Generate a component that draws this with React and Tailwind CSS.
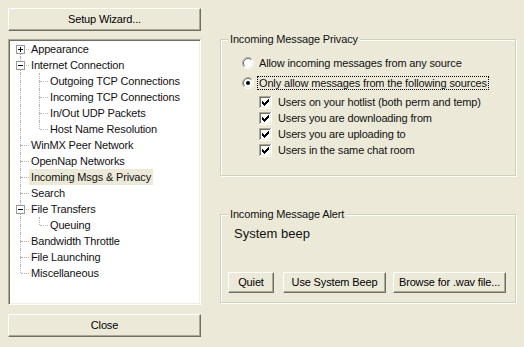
import React from 'react';

const tree = [
  { label: 'Appearance', level: 0, exp: '+', first: true },
  { label: 'Internet Connection', level: 0, exp: '-' },
  { label: 'Outgoing TCP Connections', level: 1 },
  { label: 'Incoming TCP Connections', level: 1 },
  { label: 'In/Out UDP Packets', level: 1 },
  { label: 'Host Name Resolution', level: 1, lastChild: true },
  { label: 'WinMX Peer Network', level: 0 },
  { label: 'OpenNap Networks', level: 0 },
  { label: 'Incoming Msgs & Privacy', level: 0, selected: true },
  { label: 'Search', level: 0 },
  { label: 'File Transfers', level: 0, exp: '-' },
  { label: 'Queuing', level: 1, lastChild: true },
  { label: 'Bandwidth Throttle', level: 0 },
  { label: 'File Launching', level: 0 },
  { label: 'Miscellaneous', level: 0, last: true },
];

const sources = [
  'Users on your hotlist (both perm and temp)',
  'Users you are downloading from',
  'Users you are uploading to',
  'Users in the same chat room',
];

const btn =
  'flex items-center justify-center bg-[#ECE9D8] border border-t-white border-l-white border-r-[#716F64] border-b-[#716F64] shadow-[inset_-1px_-1px_0_#ACA899] text-[11px] text-black tracking-[-0.15px]';

function Expander({ plus }) {
  return (
    <svg width="9" height="9" className="absolute left-[6px] top-[4px]">
      <rect x="0.5" y="0.5" width="8" height="8" fill="#fff" stroke="#919B9C" />
      <path d="M2 4.5h5" stroke="#000" shapeRendering="crispEdges" />
      {plus && <path d="M4.5 2v5" stroke="#000" shapeRendering="crispEdges" />}
    </svg>
  );
}

function LineCell({ top, bottom, horiz, exp }) {
  return (
    <div className="relative w-[19px] h-4 shrink-0">
      {top && <div className="absolute left-[10px] top-0 h-2 border-l border-dotted border-[#B4B4B4]" />}
      {bottom && <div className="absolute left-[10px] top-2 h-2 border-l border-dotted border-[#B4B4B4]" />}
      {horiz && <div className="absolute left-[11px] top-2 w-2 border-t border-dotted border-[#B4B4B4]" />}
      {exp && <Expander plus={exp === '+'} />}
    </div>
  );
}

function TreeRow({ item }) {
  return (
    <div className="flex h-4 items-center">
      {item.level === 0 ? (
        <LineCell top={!item.first} bottom={!item.last} horiz exp={item.exp} />
      ) : (
        <>
          <LineCell top bottom />
          <LineCell top bottom={!item.lastChild} horiz />
        </>
      )}
      <span className={`px-[2px] leading-4 whitespace-nowrap ${item.selected ? 'bg-[#ECE9D8]' : ''}`}>
        {item.label}
      </span>
    </div>
  );
}

function Radio({ checked }) {
  return (
    <svg width="12" height="12" viewBox="0 0 12 12" className="shrink-0">
      <circle cx="6" cy="6" r="5" fill="#fff" />
      <path d="M2.1 9.9A5.5 5.5 0 0 1 9.9 2.1" fill="none" stroke="#ACA899" />
      <path d="M9.9 2.1A5.5 5.5 0 0 1 2.1 9.9" fill="none" stroke="#fff" />
      <path d="M2.8 9.2A4.5 4.5 0 0 1 9.2 2.8" fill="none" stroke="#716F64" />
      <path d="M9.2 2.8A4.5 4.5 0 0 1 2.8 9.2" fill="none" stroke="#F1EFE2" />
      {checked && <circle cx="6" cy="6" r="2" fill="#000" />}
    </svg>
  );
}

function Check() {
  return (
    <svg width="13" height="13" viewBox="0 0 13 13" className="shrink-0" shapeRendering="crispEdges">
      <rect x="2" y="2" width="9" height="9" fill="#fff" />
      <path d="M0.5 12V0.5H12" fill="none" stroke="#ACA899" />
      <path d="M0 12.5H12.5V0" fill="none" stroke="#fff" />
      <path d="M1.5 11V1.5H11" fill="none" stroke="#716F64" />
      <path d="M1 11.5H11.5V1" fill="none" stroke="#F1EFE2" />
      <path d="M3.5 5v3M4.5 6v3M5.5 7v3M6.5 6v3M7.5 5v3M8.5 4v3M9.5 3v3" stroke="#000" />
    </svg>
  );
}

function Group({ title, className, children }) {
  return (
    <div
      className={`relative border border-[#D0D0BF] shadow-[inset_1px_1px_0_#fff,1px_1px_0_#fff] ${className}`}
    >
      <span className="absolute -top-[7px] left-[7px] px-[2px] bg-[#ECE9D8] leading-[13px]">{title}</span>
      {children}
    </div>
  );
}

export default function App() {
  return (
    <div className="w-[524px] h-[347px] bg-[#ECE9D8] flex pl-2 pt-2 text-[11px] text-[#111] tracking-[-0.15px] [font-family:'Liberation_Sans',Arial,sans-serif]">
      <div className="w-[193px] flex flex-col">
        <button className={`${btn} h-[23px] w-full`}>Setup Wizard...</button>
        <div className="mt-2 h-[266px] bg-white border border-t-[#ACA899] border-l-[#ACA899] border-r-white border-b-white shadow-[inset_1px_1px_0_#716F64,inset_-1px_-1px_0_#F1EFE2] p-px">
          {tree.map((item) => (
            <TreeRow key={item.label} item={item} />
          ))}
        </div>
        <button className={`${btn} mt-[9px] h-[23px] w-full`}>Close</button>
      </div>

      <div className="ml-[19px] w-[296px] flex flex-col">
        <Group title="Incoming Message Privacy" className="mt-[31px] h-[137px] pt-[13px] pl-[21px]">
          <div className="flex h-5 items-center">
            <Radio />
            <span className="ml-[3px] px-px border border-transparent leading-[12px]">
              Allow incoming messages from any source
            </span>
          </div>
          <div className="flex h-5 items-center">
            <Radio checked />
            <span className="ml-[3px] px-px border border-dotted border-black leading-[12px]">
              Only allow messages from the following sources
            </span>
          </div>
          <div className="mt-px ml-[17px] flex flex-col">
            {sources.map((s) => (
              <div key={s} className="flex h-4 items-center gap-[6px]">
                <Check />
                <span>{s}</span>
              </div>
            ))}
          </div>
        </Group>

        <Group title="Incoming Message Alert" className="mt-[38px] h-[89px] pt-[11px]">
          <div className="pl-[13px] text-[13px] leading-4 tracking-normal">System beep</div>
          <div className="mt-[30px] pl-[7px] flex items-center">
            <button className={`${btn} h-[21px] w-[46px]`}>Quiet</button>
            <button className={`${btn} ml-[9px] h-[21px] w-[103px]`}>Use System Beep</button>
            <button className={`${btn} ml-[7px] h-[21px] w-[113px]`}>Browse for .wav file...</button>
          </div>
        </Group>
      </div>
    </div>
  );
}
